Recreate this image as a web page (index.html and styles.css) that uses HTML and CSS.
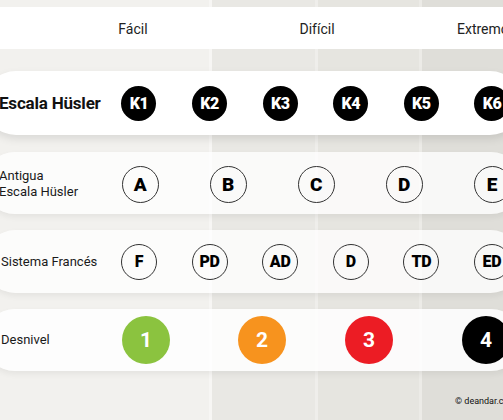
FILE: index.html
```html
<!DOCTYPE html>
<html lang="es">
<head>
<meta charset="utf-8">
<link rel="stylesheet" href="styles.css">
</head>
<body>
<div class="page">
  <header class="head">
    <span class="head-item">Fácil</span>
    <span class="head-item">Difícil</span>
    <span class="head-item head-last">Extremo</span>
  </header>
  <main class="rows">
    <section class="row row-k">
      <div class="label label-main">Escala Hüsler</div>
      <span class="dot dot-solid">K1</span>
      <span class="dot dot-solid">K2</span>
      <span class="dot dot-solid">K3</span>
      <span class="dot dot-solid">K4</span>
      <span class="dot dot-solid">K5</span>
      <span class="dot dot-solid">K6</span>
    </section>
    <section class="row row-old">
      <div class="label">Antigua<br>Escala Hüsler</div>
      <span class="dot dot-ring dot-big">A</span>
      <span class="dot dot-ring dot-big">B</span>
      <span class="dot dot-ring dot-big">C</span>
      <span class="dot dot-ring dot-big">D</span>
      <span class="dot dot-ring dot-big">E</span>
    </section>
    <section class="row row-fr">
      <div class="label">Sistema Francés</div>
      <span class="dot dot-ring">F</span>
      <span class="dot dot-ring">PD</span>
      <span class="dot dot-ring">AD</span>
      <span class="dot dot-ring">D</span>
      <span class="dot dot-ring">TD</span>
      <span class="dot dot-ring">ED</span>
    </section>
    <section class="row row-des">
      <div class="label">Desnivel</div>
      <span class="dot dot-num green">1</span>
      <span class="dot dot-num orange">2</span>
      <span class="dot dot-num red">3</span>
      <span class="dot dot-num black">4</span>
    </section>
  </main>
  <footer class="credit">© deandar.com</footer>
</div>
</body>
</html>
```
FILE: styles.css
```css
html, body {
  margin: 0;
  padding: 0;
  overflow: hidden;
}
body {
  width: 503px;
  height: 420px;
  font-family: Roboto, "Liberation Sans", sans-serif;
  color: #1a1a1a;
  background:
    linear-gradient(to right,
      #f2f1ee 0, #f2f1ee 209px,
      #f7f6f4 209px, #f7f6f4 212px,
      #e9e8e4 212px, #e9e8e4 315px,
      #efeeeb 315px, #efeeeb 318px,
      #e6e5e0 318px, #e6e5e0 419px,
      #ecebe7 419px, #ecebe7 422px,
      #dfded9 422px, #dfded9 100%);
}
.page {
  display: flex;
  flex-direction: column;
}
.head {
  margin-top: 7px;
  height: 42px;
  background: #fff;
  display: grid;
  grid-template-columns: 266px 102px 135px;
  align-items: center;
  font-size: 14px;
  color: #222;
  padding-top: 2px;
  box-sizing: border-box;
}
.head-item {
  text-align: center;
  white-space: nowrap;
}
.head-last {
  text-align: left;
  padding-left: 89px;
}
.rows {
  margin-top: 22px;
  display: flex;
  flex-direction: column;
  margin-left: -16px;
  width: 538px;
}
.row {
  display: grid;
  align-items: center;
  justify-items: center;
  border-radius: 32px;
  padding-left: 16px;
  background: rgba(255, 255, 255, 0.78);
  box-shadow: 0 3px 6px rgba(0, 0, 0, 0.06);
}
.row-k {
  height: 64px;
  background: #fff;
  box-shadow: 0 4px 8px rgba(0, 0, 0, 0.10);
  grid-template-columns: 103.7px repeat(6, 70.6px);
}
.row-old {
  height: 62px;
  margin-top: 17px;
  grid-template-columns: 96px repeat(5, 88px);
}
.row-fr {
  height: 63px;
  margin-top: 16px;
  grid-template-columns: 103.7px repeat(6, 70.6px);
}
.row-des {
  height: 62px;
  margin-top: 16px;
  grid-template-columns: 88px 116px 116px 98px 136px;
  background: rgba(255, 255, 255, 0.85);
}
.label {
  justify-self: start;
  font-size: 13px;
  line-height: 16px;
  color: #1a1a1a;
  white-space: nowrap;
  margin-left: 1px;
}
.row-old .label {
  margin-left: -1px;
  margin-top: 2px;
}
.label-main {
  font-size: 17px;
  font-weight: 700;
  margin-left: -1px;
  letter-spacing: -0.2px;
  color: #111;
}
.dot {
  width: 35px;
  height: 35px;
  border-radius: 50%;
  display: flex;
  align-items: center;
  justify-content: center;
  font-weight: 900;
  font-size: 16px;
  box-sizing: border-box;
}
.dot-solid {
  background: #000;
  color: #fff;
  letter-spacing: -0.5px;
}
.dot-ring {
  border: 1px solid #333;
  color: #000;
  letter-spacing: -0.3px;
}
.dot-big {
  width: 37px;
  height: 37px;
  font-size: 19px;
  margin-top: 2px;
}
.row-fr .dot {
  width: 36px;
  height: 36px;
}
.dot-num {
  width: 48px;
  height: 48px;
  color: #fff;
  font-size: 21px;
  font-weight: 700;
}
.green { background: #8bc33f; }
.orange { background: #f7931e; }
.red { background: #ec1c24; }
.black { background: #000; }
.credit {
  margin-top: 25px;
  padding-left: 455px;
  font-size: 9px;
  white-space: nowrap;
  color: #111;
}
```
